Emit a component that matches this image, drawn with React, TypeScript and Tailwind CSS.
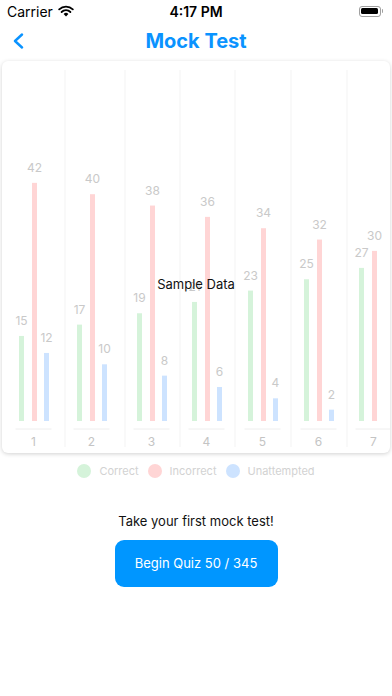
import React from "react";

const GREEN = [15, 17, 19, 21, 23, 25, 27];
const RED = [42, 40, 38, 36, 34, 32, 30];
const BLUE = [12, 10, 8, 6, 4, 2, 0];
const RED_X = [32, 90, 150, 205, 261, 317, 372];
const GRID_X = [65, 125, 180, 235, 291, 347];

const BASE = 421;
const UNIT = 5.67;
const BAR_W = 5;

function Bar({ x, v, fill }: { x: number; v: number; fill: string }) {
  if (v <= 0) return null;
  const h = v * UNIT;
  return (
    <g>
      <rect x={x} y={BASE - h} width={BAR_W} height={h} fill={fill} />
      <text
        x={x + BAR_W / 2}
        y={BASE - h - 11}
        textAnchor="middle"
        fontSize="12"
        fill="#c9c9c9"
        fontFamily="Inter, sans-serif"
      >
        {v}
      </text>
    </g>
  );
}

function Chart() {
  return (
    <svg viewBox="2 61 388 392" className="block h-[392px] w-[388px]">
      {GRID_X.map((x) => (
        <line key={x} x1={x} x2={x} y1={70} y2={447} stroke="#f3f3f3" strokeWidth="1" />
      ))}
      {RED_X.map((rx, i) => {
        const center = rx + 1.5;
        return (
          <g key={i}>
            <Bar x={rx - 13} v={GREEN[i]} fill="#d5f3da" />
            <Bar x={rx} v={RED[i]} fill="#ffd5d5" />
            <Bar x={rx + 12} v={BLUE[i]} fill="#cde3ff" />
            <line x1={center - 18} x2={center + 18} y1={429} y2={429} stroke="#eeeeee" strokeWidth="1" />
            <text
              x={center}
              y={446}
              textAnchor="middle"
              fontSize="12"
              fill="#c4c4c4"
              fontFamily="Inter, sans-serif"
            >
              {i + 1}
            </text>
          </g>
        );
      })}
      <text
        x={196}
        y={289}
        textAnchor="middle"
        fontSize="13"
        fill="#111111"
        fontFamily="Inter, sans-serif"
      >
        Sample Data
      </text>
    </svg>
  );
}

function StatusBar() {
  return (
    <div className="relative flex h-[22px] items-center px-[7px] text-[14px] text-black">
      <div className="flex items-center gap-[5px]">
        <span>Carrier</span>
        <svg width="16" height="12" viewBox="0 0 16 12">
          <path d="M8 11.5 L5.6 9 A3.4 3.4 0 0 1 10.4 9 Z" fill="#000" />
          <path d="M3.6 7 A6.2 6.2 0 0 1 12.4 7" stroke="#000" strokeWidth="1.8" fill="none" strokeLinecap="round" />
          <path d="M1.2 4.4 A9.6 9.6 0 0 1 14.8 4.4" stroke="#000" strokeWidth="1.8" fill="none" strokeLinecap="round" />
        </svg>
      </div>
      <span className="absolute left-1/2 -translate-x-1/2 font-semibold">4:17 PM</span>
      <div className="ml-auto mr-[2px] flex items-center">
        <div className="flex h-[11px] w-[22px] items-center rounded-[3px] border border-[#a0a0a0] p-[1.5px]">
          <div className="h-full w-full rounded-[1.5px] bg-black" />
        </div>
        <div className="ml-[1px] h-[4px] w-[1.5px] rounded-r bg-[#a0a0a0]" />
      </div>
    </div>
  );
}

function NavBar() {
  return (
    <div className="relative flex h-[38px] items-center justify-center">
      <svg className="absolute left-[12px] top-[11px]" width="13" height="16" viewBox="0 0 13 16">
        <path d="M10 1.5 L3 8 L10 14.5" stroke="#0a93ff" strokeWidth="2.4" fill="none" strokeLinecap="round" strokeLinejoin="round" />
      </svg>
      <span className="text-[20px] font-bold text-[#0a93ff]">Mock Test</span>
    </div>
  );
}

function LegendItem({ color, label }: { color: string; label: string }) {
  return (
    <div className="flex items-center gap-[8px]">
      <span className={`h-[14px] w-[14px] rounded-full ${color}`} />
      <span>{label}</span>
    </div>
  );
}

export default function App() {
  return (
    <div className="h-[696px] w-[392px] overflow-hidden bg-white font-['Inter',sans-serif]">
      <StatusBar />
      <NavBar />
      <div className="mx-[2px] mt-[1px] overflow-hidden rounded-[6px] bg-white shadow-[0_1px_4px_rgba(0,0,0,0.18)]">
        <Chart />
      </div>
      <div className="mt-[10px] flex justify-center gap-[9px] text-[11px] text-[#d2d2d2]">
        <LegendItem color="bg-[#d5f3da]" label="Correct" />
        <LegendItem color="bg-[#ffd5d5]" label="Incorrect" />
        <LegendItem color="bg-[#cde3ff]" label="Unattempted" />
      </div>
      <div className="mt-[32px] flex flex-col items-center">
        <p className="text-[13px] text-[#111]">Take your first mock test!</p>
        <button className="mt-[9px] h-[47px] w-[163px] rounded-[9px] bg-[#0096ff] text-[13px] text-white">
          Begin Quiz 50 / 345
        </button>
      </div>
    </div>
  );
}
